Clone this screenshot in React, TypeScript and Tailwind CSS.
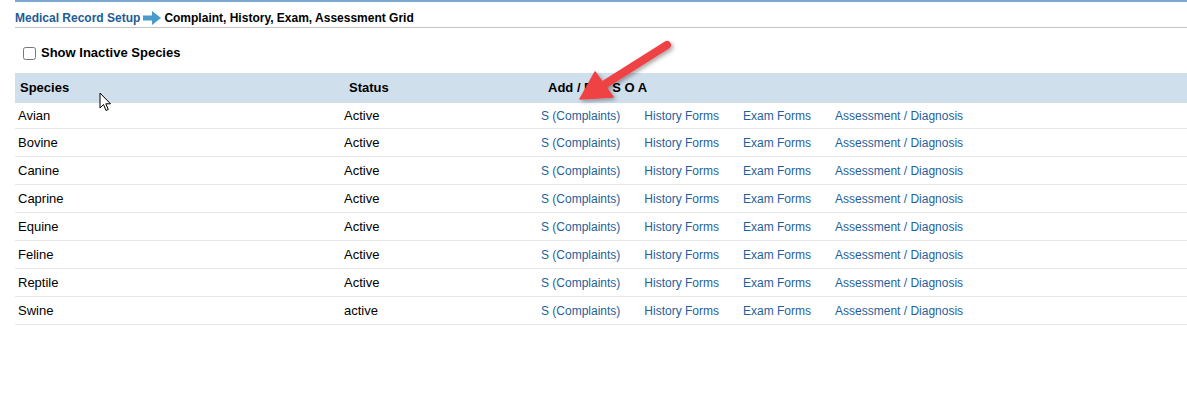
import React from "react";

const species = [
  { name: "Avian", status: "Active" },
  { name: "Bovine", status: "Active" },
  { name: "Canine", status: "Active" },
  { name: "Caprine", status: "Active" },
  { name: "Equine", status: "Active" },
  { name: "Feline", status: "Active" },
  { name: "Reptile", status: "Active" },
  { name: "Swine", status: "active" },
];

const links = ["S (Complaints)", "History Forms", "Exam Forms", "Assessment / Diagnosis"];

function BreadcrumbArrow() {
  return (
    <svg width="18" height="14" viewBox="0 0 18 14" className="mx-[3px]">
      <path d="M0 4.5 H9 V0 L18 7 L9 14 V9.5 H0 Z" fill="#4a9bcb" />
    </svg>
  );
}

function Cursor() {
  return (
    <svg width="13" height="21" viewBox="0 0 13 21" className="absolute left-[99px] top-[92px]">
      <path
        d="M1 1 L1 16 L4.5 12.5 L7 18.5 L9.3 17.5 L6.8 11.8 L11.5 11.8 Z"
        fill="#fff"
        stroke="#000"
        strokeWidth="1"
        strokeLinejoin="round"
      />
    </svg>
  );
}

function RedArrow() {
  return (
    <svg width="120" height="90" viewBox="0 0 120 90" className="absolute left-[570px] top-[36px]">
      <defs>
        <filter id="sh" x="-20%" y="-20%" width="140%" height="140%">
          <feDropShadow dx="2" dy="2" stdDeviation="2" floodColor="#000" floodOpacity="0.35" />
        </filter>
      </defs>
      <g filter="url(#sh)">
        <line x1="97" y1="9" x2="32" y2="50" stroke="#ee4244" strokeWidth="8" strokeLinecap="round" />
        <path d="M10 63 L25 36 L43 61 Z" fill="#ee4244" strokeLinejoin="round" stroke="#ee4244" strokeWidth="1.5" />
      </g>
    </svg>
  );
}

export default function App() {
  return (
    <div className="relative w-[1187px] h-[399px] bg-white font-['Liberation_Sans',Arial,sans-serif] text-black overflow-hidden">
      <div className="pl-[15px]">
        <div className="h-[2px] bg-[#7aa8d0]" />
        <div className="flex items-center h-[26px] pt-[7px] text-[12px] font-bold border-b border-[#c4c4c4]">
          <span className="text-[#1d5c96]">Medical Record Setup</span>
          <BreadcrumbArrow />
          <span>Complaint, History, Exam, Assessment Grid</span>
        </div>

        <label className="flex items-center h-[22px] mt-[14px] pl-[8px] gap-[5px] text-[13px] font-bold">
          <input type="checkbox" className="w-[13px] h-[13px] m-0" />
          <span>Show Inactive Species</span>
        </label>

        <div className="mt-[9px]">
          <div className="flex items-center h-[30px] bg-[#d0dfec] text-[13px] font-bold">
            <div className="w-[329px] pl-[5px]">Species</div>
            <div className="w-[199px] pl-[5px]">Status</div>
            <div className="pl-[5px]">Add / Edit S O A</div>
          </div>
          {species.map((s, i) => (
            <div
              key={s.name}
              className={
                i === 0
                  ? "flex items-center h-[26px] border-b border-[#e6e6e6] text-[13px]"
                  : "flex items-center h-[28px] border-b border-[#e6e6e6] text-[13px]"
              }
            >
              <div className="w-[326px] pl-[3px]">{s.name}</div>
              <div className="w-[197px] pl-[3px]">{s.status}</div>
              <div className="flex pl-[3px] gap-[24px] text-[12px] text-[#1f5f9b]">
                {links.map((l) => (
                  <a key={l} href="#" className="no-underline">
                    {l}
                  </a>
                ))}
              </div>
            </div>
          ))}
        </div>
      </div>
      <Cursor />
      <RedArrow />
    </div>
  );
}
